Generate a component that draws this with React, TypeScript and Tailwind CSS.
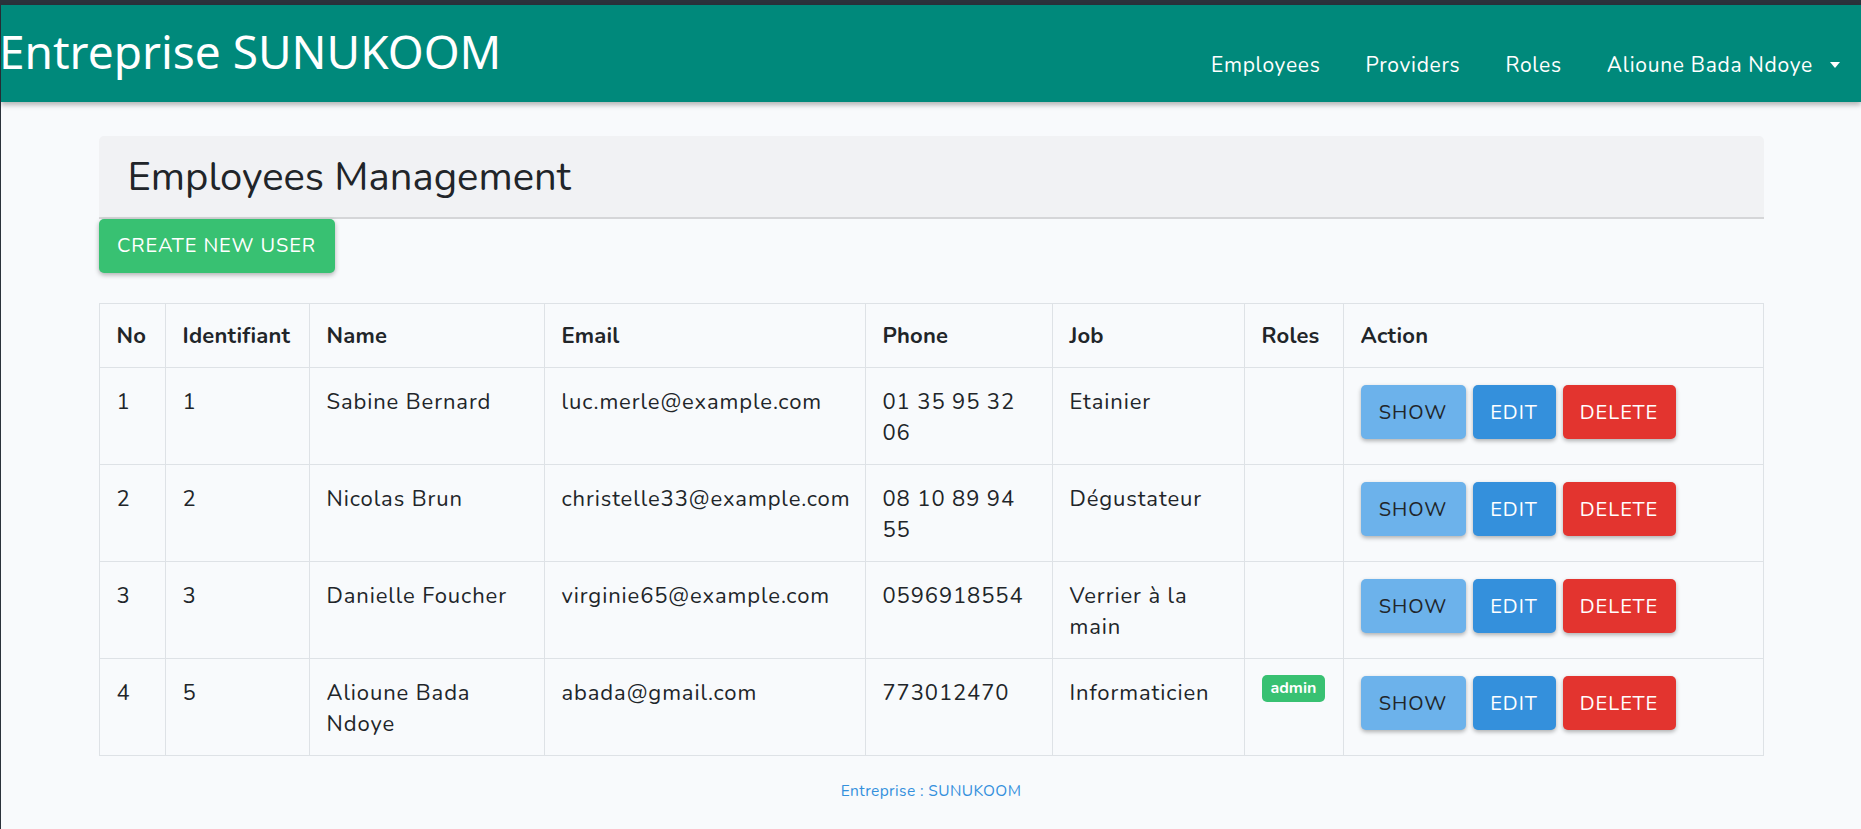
import React from 'react';

type Employee = {
  no: number;
  id: number;
  name: string;
  email: string;
  phone: string;
  job: string;
  roles: string[];
};

const employees: Employee[] = [
  { no: 1, id: 1, name: 'Sabine Bernard', email: 'luc.merle@example.com', phone: '01 35 95 32 06', job: 'Etainier', roles: [] },
  { no: 2, id: 2, name: 'Nicolas Brun', email: 'christelle33@example.com', phone: '08 10 89 94 55', job: 'Dégustateur', roles: [] },
  { no: 3, id: 3, name: 'Danielle Foucher', email: 'virginie65@example.com', phone: '0596918554', job: 'Verrier à la main', roles: [] },
  { no: 4, id: 5, name: 'Alioune Bada Ndoye', email: 'abada@gmail.com', phone: '773012470', job: 'Informaticien', roles: ['admin'] },
];

const font = "font-['Nunito','Open_Sans',sans-serif]";

function Navbar() {
  return (
    <header className="relative z-10 flex h-[97px] items-start justify-between bg-[#00897b] shadow-[0_3px_5px_rgba(0,0,0,0.28)]">
      <a className="-ml-[2px] pt-[22px] font-['Noto_Sans',sans-serif] text-[46px] leading-[48px] text-white">
        Entreprise SUNUKOOM
      </a>
      <nav className={`flex items-center gap-[45px] pr-[21px] pt-[45px] text-[21px] leading-[30px] tracking-[0.7px] text-white ${font}`}>
        <a>Employees</a>
        <a>Providers</a>
        <a>Roles</a>
        <a className="flex items-center">
          Alioune Bada Ndoye
          <span className="ml-[17px] h-0 w-0 border-x-[5px] border-t-[6px] border-x-transparent border-t-white" />
        </a>
      </nav>
    </header>
  );
}

function ActionButtons() {
  return (
    <div className="flex gap-[7px]">
      <button className="flex h-[54px] w-[105px] items-center justify-center rounded-[5px] bg-[#6cb2eb] text-[20px] tracking-[1px] text-[#212529] shadow-[0_2px_4px_rgba(0,0,0,0.3)]">
        SHOW
      </button>
      <button className="flex h-[54px] w-[83px] items-center justify-center rounded-[5px] bg-[#3490dc] text-[20px] tracking-[1px] text-white shadow-[0_2px_4px_rgba(0,0,0,0.3)]">
        EDIT
      </button>
      <button className="flex h-[54px] w-[113px] items-center justify-center rounded-[5px] bg-[#e3342f] text-[20px] tracking-[1px] text-white shadow-[0_2px_4px_rgba(0,0,0,0.3)]">
        DELETE
      </button>
    </div>
  );
}

export default function App() {
  return (
    <div className={`min-h-screen border-l border-t-[5px] border-l-[#2b323b] border-t-[#2b323b] bg-[#f8fafc] text-[#212529] ${font}`}>
      <Navbar />
      <main className="mx-auto w-[1665px] pt-[34px]">
        <div className="flex h-[83px] items-center rounded-t-[5px] border-b-2 border-[#d5d6d8] bg-[#f1f2f4] px-[29px]">
          <h1 className="text-[40px] leading-[46px] text-[#212529]">Employees Management</h1>
        </div>
        <button className="flex h-[54px] w-[236px] items-center justify-center rounded-[5px] bg-[#38c172] text-[20px] tracking-[0.9px] text-white shadow-[0_2px_5px_rgba(0,0,0,0.3)]">
          CREATE NEW USER
        </button>

        <table className="mt-[30px] w-full table-fixed border-collapse border border-[#dee2e6] text-left text-[22px] leading-[31px]">
          <colgroup>
            <col className="w-[66px]" />
            <col className="w-[144px]" />
            <col className="w-[235px]" />
            <col className="w-[321px]" />
            <col className="w-[187px]" />
            <col className="w-[192px]" />
            <col className="w-[99px]" />
            <col />
          </colgroup>
          <thead>
            <tr className="h-[64px]">
              {['No', 'Identifiant', 'Name', 'Email', 'Phone', 'Job', 'Roles', 'Action'].map((h) => (
                <th key={h} className="border border-[#dee2e6] px-[17px] pb-[15px] pt-[17px] align-top font-bold tracking-[0.2px]">
                  {h}
                </th>
              ))}
            </tr>
          </thead>
          <tbody>
            {employees.map((e) => (
              <tr key={e.no} className="h-[97px]">
                <td className="border border-[#dee2e6] px-[17px] pb-[15px] pt-[19px] align-top">{e.no}</td>
                <td className="border border-[#dee2e6] px-[17px] pb-[15px] pt-[19px] align-top">{e.id}</td>
                <td className="border border-[#dee2e6] px-[17px] pb-[15px] pt-[19px] align-top tracking-[0.9px]">{e.name}</td>
                <td className="border border-[#dee2e6] px-[17px] pb-[15px] pt-[19px] align-top tracking-[0.9px]">{e.email}</td>
                <td className="border border-[#dee2e6] px-[17px] pb-[15px] pt-[19px] align-top tracking-[0.9px]">{e.phone}</td>
                <td className="border border-[#dee2e6] px-[17px] pb-[15px] pt-[19px] align-top tracking-[0.9px]">{e.job}</td>
                <td className="border border-[#dee2e6] px-[17px] pt-[16px] align-top">
                  <div className="flex">
                    {e.roles.map((r) => (
                      <span key={r} className="rounded-[5px] bg-[#38c172] px-[9px] text-[16px] font-bold leading-[27px] text-white">
                        {r}
                      </span>
                    ))}
                  </div>
                </td>
                <td className="border border-[#dee2e6] p-[17px] align-top">
                  <ActionButtons />
                </td>
              </tr>
            ))}
          </tbody>
        </table>

        <footer className="mt-[25px] text-center text-[15.5px] leading-[20px] tracking-[0.4px] text-[#3490dc]">
          Entreprise : SUNUKOOM
        </footer>
      </main>
    </div>
  );
}
